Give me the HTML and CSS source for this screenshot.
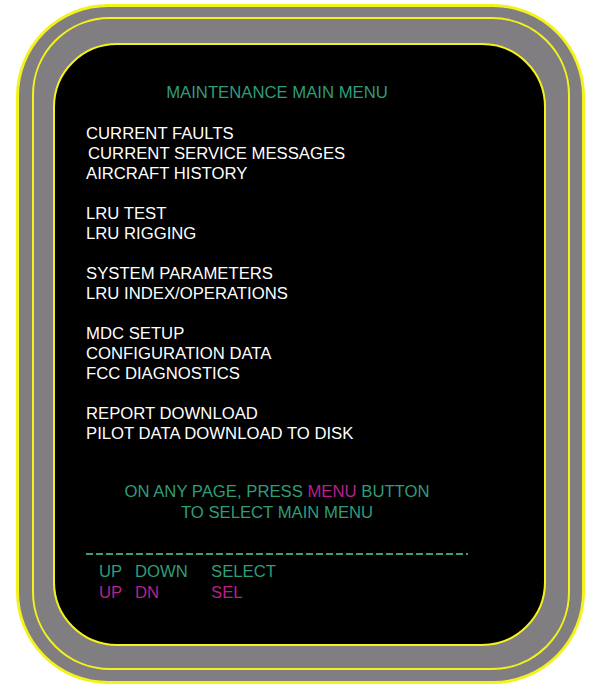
FILE: index.html
```html
<!DOCTYPE html>
<html>
<head>
<meta charset="utf-8">
<link rel="stylesheet" href="styles.css">
</head>
<body>
<div class="bezel">
  <div class="ring">
    <div class="screen">
      <div class="column">
        <div class="title">MAINTENANCE MAIN MENU</div>
        <div class="group">
          <div class="item">CURRENT FAULTS</div>
          <div class="item shift">CURRENT SERVICE MESSAGES</div>
          <div class="item">AIRCRAFT HISTORY</div>
        </div>
        <div class="group">
          <div class="item">LRU TEST</div>
          <div class="item">LRU RIGGING</div>
        </div>
        <div class="group">
          <div class="item">SYSTEM PARAMETERS</div>
          <div class="item">LRU INDEX/OPERATIONS</div>
        </div>
        <div class="group">
          <div class="item">MDC SETUP</div>
          <div class="item">CONFIGURATION DATA</div>
          <div class="item">FCC DIAGNOSTICS</div>
        </div>
        <div class="group">
          <div class="item">REPORT DOWNLOAD</div>
          <div class="item">PILOT DATA DOWNLOAD TO DISK</div>
        </div>
        <div class="note">
          <div>ON ANY PAGE, PRESS <span class="mag">MENU</span> BUTTON</div>
          <div>TO SELECT MAIN MENU</div>
        </div>
        <div class="rule"></div>
        <div class="keys">
          <span class="grn">UP</span><span class="grn">DOWN</span><span class="grn">SELECT</span>
          <span class="mag">UP</span><span class="mag">DN</span><span class="mag">SEL</span>
        </div>
      </div>
    </div>
  </div>
</div>
</body>
</html>
```

FILE: styles.css
```css
html, body {
  margin: 0;
  padding: 0;
  background: #ffffff;
}
body {
  font-family: "Liberation Sans", Arial, sans-serif;
  font-size: 16.7px;
  line-height: 20px;
}
.bezel {
  box-sizing: border-box;
  margin: 4px 0 0 16px;
  width: 569px;
  height: 680px;
  background: #807e81;
  border: 3px solid #f4f21c;
  border-radius: 92px;
  padding: 10px 12px 11px 13px;
}
.ring {
  box-sizing: border-box;
  height: 100%;
  border: 2px solid #f4f21c;
  border-radius: 78px;
  padding: 24px 22px 22px 19px;
}
.screen {
  box-sizing: border-box;
  height: 100%;
  background: #000000;
  border: 2px solid #f4f21c;
  border-radius: 64px;
  padding: 38px 0 0 31px;
}
.column {
  width: 382px;
  display: flex;
  flex-direction: column;
}
.title {
  color: #2f9c7a;
  text-align: center;
  margin-bottom: 21px;
}
.group {
  color: #ffffff;
  margin-bottom: 20px;
}
.item.shift {
  padding-left: 2px;
}
.note {
  color: #2f9c7a;
  text-align: center;
  margin-top: 18px;
}
.note div + div {
  margin-top: 1px;
}
.mag {
  color: #b8208e;
}
.grn {
  color: #2f9c7a;
}
.rule {
  margin-top: 30px;
  height: 2px;
  background: repeating-linear-gradient(90deg, #3d9c7f 0 7px, transparent 7px 10px);
}
.keys {
  margin-top: 7px;
  display: grid;
  grid-template-columns: 36px 76px auto;
  padding-left: 13px;
  row-gap: 1px;
}
```
